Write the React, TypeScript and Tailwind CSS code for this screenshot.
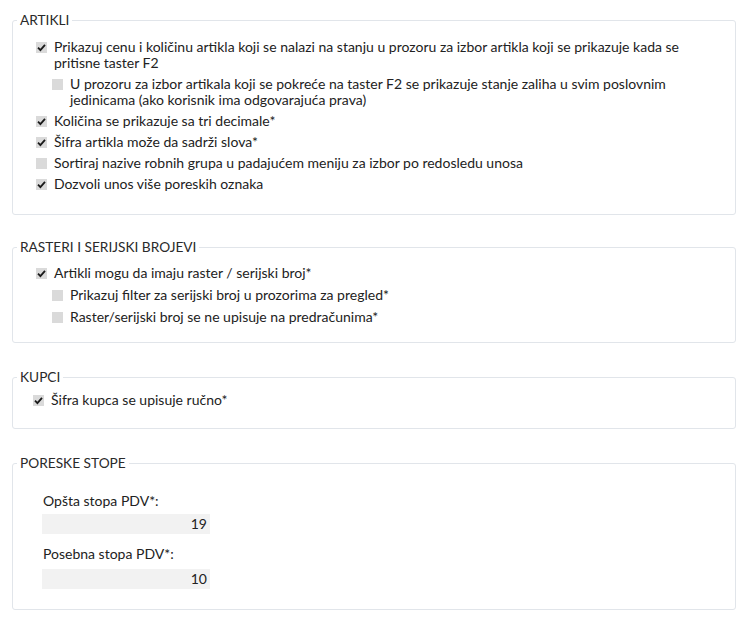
import React from "react";

function Box({ checked }: { checked: boolean }) {
  return (
    <span className="relative mt-[3px] inline-block h-[11px] w-[11px] shrink-0 bg-[#dadada]">
      {checked && (
        <svg viewBox="0 0 12 12" className="absolute left-[0px] top-[0px] h-[11px] w-[11px]">
          <path d="M2.2 6.2 L4.8 8.8 L9.8 3.2" fill="none" stroke="#1a1a1a" strokeWidth="2" />
        </svg>
      )}
    </span>
  );
}

function Item({ checked, children, sub }: { checked: boolean; children: React.ReactNode; sub?: boolean }) {
  return (
    <div className={"flex gap-[7px] " + (sub ? "pl-[16px]" : "")}>
      <Box checked={checked} />
      <span className="leading-[16px]">{children}</span>
    </div>
  );
}

function Field({ title, children, cls, outer }: { title: string; children: React.ReactNode; cls: string; outer: string }) {
  return (
    <fieldset className={"rounded-[3px] border border-[#e1e5ea] px-[4px] " + outer}>
      <legend className="px-[3px] text-[13.7px] leading-[20px] text-[#2a2a2a]">{title}</legend>
      <div className={cls}>{children}</div>
    </fieldset>
  );
}

export default function App() {
  return (
    <div
      className="min-h-[617px] w-[745px] bg-white pt-[10px] text-[14px] text-[#222]"
      style={{ fontFamily: "Lato, 'Open Sans', sans-serif" }}
    >
      <div className="ml-[12px] flex w-[724px] flex-col">
        <Field outer="" title="ARTIKLI" cls="pl-[19px] pr-[16px] pt-[9px] pb-[22px]">
          <div className="flex flex-col gap-[5px]">
            <Item checked>
              Prikazuj cenu i količinu artikla koji se nalazi na stanju u prozoru za izbor artikla koji se prikazuje kada se
              pritisne taster F2
            </Item>
            <Item checked={false} sub>
              U prozoru za izbor artikala koji se pokreće na taster F2 se prikazuje stanje zaliha u svim poslovnim
              jedinicama (ako korisnik ima odgovarajuća prava)
            </Item>
            <Item checked>Količina se prikazuje sa tri decimale*</Item>
            <Item checked>Šifra artikla može da sadrži slova*</Item>
            <Item checked={false}>Sortiraj nazive robnih grupa u padajućem meniju za izbor po redosledu unosa</Item>
            <Item checked>Dozvoli unos više poreskih oznaka</Item>
          </div>
        </Field>
        <Field outer="mt-[22px]" title="RASTERI I SERIJSKI BROJEVI" cls="pl-[19px] pr-[16px] pt-[8px] pb-[17px]">
          <div className="flex flex-col gap-[6px]">
            <Item checked>Artikli mogu da imaju raster / serijski broj*</Item>
            <Item checked={false} sub>Prikazuj filter za serijski broj u prozorima za pregled*</Item>
            <Item checked={false} sub>Raster/serijski broj se ne upisuje na predračunima*</Item>
          </div>
        </Field>
        <Field outer="mt-[24px]" title="KUPCI" cls="pl-[16px] pr-[16px] pt-[5px] pb-[20px]">
          <Item checked>Šifra kupca se upisuje ručno*</Item>
        </Field>
        <Field outer="mt-[24px]" title="PORESKE STOPE" cls="pl-[25px] pr-[16px] pt-[19px] pb-[20px]">
          <div className="flex flex-col">
            <label className="ml-[1px] leading-[18px]">Opšta stopa PDV*:</label>
            <div className="mt-[4px] h-[20px] w-[168px] bg-[#f2f2f2] pr-[3px] text-right leading-[20px] text-[#222]">19</div>
            <label className="ml-[1px] mt-[11px] leading-[18px]">Posebna stopa PDV*:</label>
            <div className="mt-[6px] h-[20px] w-[168px] bg-[#f2f2f2] pr-[3px] text-right leading-[20px] text-[#222]">10</div>
          </div>
        </Field>
      </div>
    </div>
  );
}
